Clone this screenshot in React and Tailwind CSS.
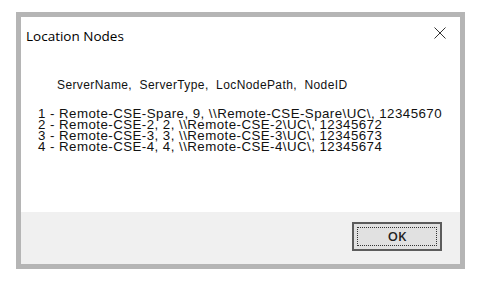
export default function App() {
    const rows = [
        "1 - Remote-CSE-Spare, 9, \\\\Remote-CSE-Spare\\UC\\, 12345670",
        "2 - Remote-CSE-2, 2, \\\\Remote-CSE-2\\UC\\, 12345672",
        "3 - Remote-CSE-3, 3, \\\\Remote-CSE-3\\UC\\, 12345673",
        "4 - Remote-CSE-4, 4, \\\\Remote-CSE-4\\UC\\, 12345674",
    ]
    return (
        <div className="w-[481px] h-[286px] bg-white pt-[12px] pl-[16px]">
            <div className="w-[449px] h-[257px] border-[5px] border-[#b5b5b5] flex flex-col">
                <div className="flex-1 bg-white relative">
                    <div className="absolute left-[5px] top-[9px] text-[13.5px] text-black" style={{ fontFamily: '"Open Sans", sans-serif' }}>
                        Location Nodes
                    </div>
                    <svg className="absolute left-[413px] top-[10px]" width="12" height="12" viewBox="0 0 12 12">
                        <path d="M0.5 0.5 L11.5 11.5 M11.5 0.5 L0.5 11.5" stroke="#333" strokeWidth="1" fill="none" />
                    </svg>
                    <div className="pt-[61px] pl-[36px] text-[12px] tracking-[0.4px] leading-[14px] text-[#111] whitespace-pre" style={{ fontFamily: '"Liberation Sans", Arial, sans-serif' }}>
                        ServerName,  ServerType,  LocNodePath,  NodeID
                    </div>
                    <div className="pt-[16px] pl-[17px] text-[13.3px] tracking-[0.45px] leading-[11px] text-[#111] whitespace-pre" style={{ fontFamily: '"Liberation Sans", Arial, sans-serif' }}>
                        {rows.map((r) => (
                            <div key={r} className="h-[11px]">{r}</div>
                        ))}
                    </div>
                </div>
                <div className="h-[52px] bg-[#f0f0f0] flex items-start justify-end pr-[18px] pt-[10px]">
                    <div className="w-[90px] h-[29px] border-2 border-[#5c5c5c] bg-[#e1e1e1] p-[3px]">
                        <div className="w-full h-full border border-dotted border-[#333] flex items-center justify-center text-[13px] font-semibold text-[#222]" style={{ fontFamily: '"Open Sans", sans-serif' }}>
                            OK
                        </div>
                    </div>
                </div>
            </div>
        </div>
    )
}
